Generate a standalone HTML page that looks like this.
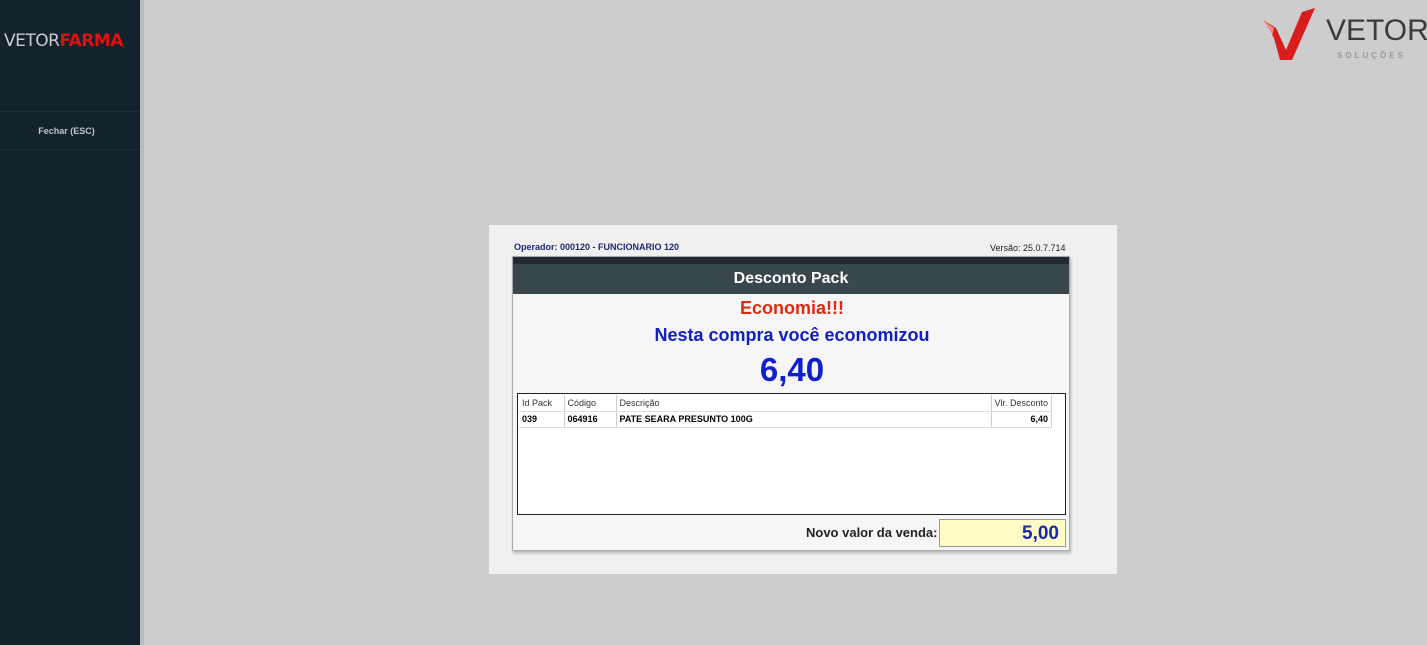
<!DOCTYPE html>
<html><head><meta charset="utf-8"><style>
*{margin:0;padding:0;box-sizing:border-box}
body{width:1427px;height:645px;background:#cdcdcd;position:relative;overflow:hidden;font-family:"Liberation Sans",sans-serif}
.abs{position:absolute}
#side{left:0;top:0;width:140px;height:645px;background:#14222b}
#strip{left:140px;top:0;width:4px;height:645px;background:#b9bcbe}
.line{left:0;width:140px;height:1px;background:#1f2e37}
#panel{left:489px;top:225px;width:628px;height:349px;background:#f0f0f0}
#dlg{left:512px;top:256px;width:558px;height:295px;background:#f6f6f6;border:1px solid #aaa;box-shadow:1px 2px 3px rgba(0,0,0,.25)}
.c{text-align:center;width:558px;left:0;font-weight:bold;font-family:"Liberation Sans",sans-serif}
table{border-collapse:collapse;font-size:9px;white-space:nowrap}
td{height:16px;padding:0 3px;border-right:1px solid #ccc;border-bottom:1px solid #ddd}
</style></head><body>
<div id="side" class="abs"></div>
<div id="strip" class="abs"></div>
<div class="abs" style="left:4px;top:31px;font-size:17px;letter-spacing:-0.5px;color:#c9ced2;font-family:'DejaVu Sans',sans-serif">VETOR<b style="color:#e01010">FARMA</b></div>
<div class="line abs" style="top:111px"></div>
<div class="line abs" style="top:149px"></div>
<div class="abs" style="left:0;width:133px;top:126px;text-align:center;font-size:9px;font-weight:bold;color:#bfc6cb">Fechar (ESC)</div>

<svg class="abs" style="left:1260px;top:6px" width="60" height="56" viewBox="0 0 60 56"><path d="M3 14 L14 32 L20 54 L32 54 L55 2 L42 6 L26 44 L16 22 Z" fill="#d81d1d"/><path d="M3 14 L12 30 L14 22 Z" fill="#ffffff" opacity=".5"/></svg>
<div class="abs" style="left:1326px;top:14px;font-size:30px;color:#3b3b3b;font-family:'Liberation Sans',sans-serif">VETOR</div>
<div class="abs" style="left:1337px;top:51px;font-size:8px;color:#999;letter-spacing:3px;font-weight:bold">SOLUÇÕES</div>

<div id="panel" class="abs"></div>
<div class="abs" style="left:514px;top:242px;font-size:9px;font-weight:bold;color:#1b2a6e">Operador: 000120 - FUNCIONARIO 120</div>
<div class="abs" style="left:990px;top:243px;font-size:9px;color:#222">Versão: 25.0.7.714</div>
<div id="dlg" class="abs">
 <div class="abs" style="left:0;top:0;width:556px;height:7px;background:#1e2a30"></div>
 <div class="abs c" style="top:7px;width:556px;height:30px;background:#37474b;color:#fff;font-size:16px;line-height:30px">Desconto Pack</div>
 <div class="abs c" style="top:41px;color:#e02a10;font-size:18px">Economia!!!</div>
 <div class="abs c" style="top:68px;color:#1320c0;font-size:18px">Nesta compra você economizou</div>
 <div class="abs c" style="top:94px;color:#1020d0;font-size:33px">6,40</div>
 <div class="abs" style="left:4px;top:136px;width:549px;height:122px;background:#fff;border:1px solid #222">
  <table style="margin:1px">
   <tr style="color:#333"><td style="width:45px">Id Pack</td><td style="width:52px">Código</td><td style="width:375px">Descrição</td><td style="width:60px">Vlr. Desconto</td></tr>
   <tr style="font-weight:bold"><td>039</td><td>064916</td><td>PATE SEARA PRESUNTO 100G</td><td style="text-align:right">6,40</td></tr>
  </table>
 </div>
 <div class="abs" style="left:293px;top:268px;font-size:13px;font-weight:bold;color:#222">Novo valor da venda:</div>
 <div class="abs" style="left:426px;top:262px;width:127px;height:28px;background:#fffcc6;border:1px solid #999;text-align:right;padding-right:6px;font-size:19px;font-weight:bold;color:#1a28b0;line-height:27px">5,00</div>
</div>
</body></html>
